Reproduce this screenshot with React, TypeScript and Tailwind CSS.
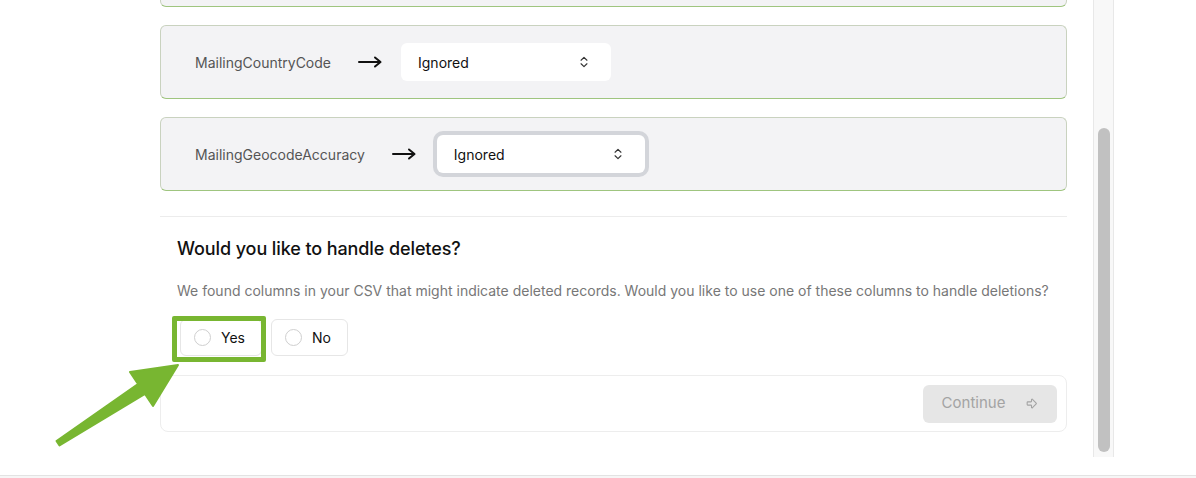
import { ArrowBigRight, ChevronsUpDown } from "lucide-react"

const font = { fontFamily: "Inter, 'Noto Sans', sans-serif" }

function LongArrow() {
  return (
    <svg width="24" height="12" viewBox="0 0 24 12" className="shrink-0">
      <path d="M1 6 H22 M17 1.5 L22.5 6 L17 10.5" fill="none" stroke="#111" strokeWidth="2" strokeLinecap="round" strokeLinejoin="round" />
    </svg>
  )
}

function Card({ children, className = "" }: { children?: React.ReactNode; className?: string }) {
  return (
    <div
      className={
        "h-[74px] shrink-0 rounded-md border border-[#c9d2bf] border-b-[#9fc57f] bg-[#f3f3f5] flex items-center pl-[34px] " +
        className
      }
    >
      {children}
    </div>
  )
}

function MappingRow({ label, focused, className = "" }: { label: string; focused?: boolean; className?: string }) {
  return (
    <Card className={className}>
      <span className="text-[14px] text-[#555]">{label}</span>
      <span className="ml-[27px]">
        <LongArrow />
      </span>
      <div
        className={
          "h-[38px] rounded-md bg-white flex items-center justify-between pl-[17px] pr-[20px] " +
          (focused ? "ring-[4px] ring-[#d3d5da] ml-[21px] w-[208px]" : "ml-[19px] w-[210px]")
        }
      >
        <span className="text-[14px] text-[#111]">Ignored</span>
        <ChevronsUpDown size={14} strokeWidth={2} className="text-[#333]" />
      </div>
    </Card>
  )
}

function Radio({ label }: { label: string }) {
  return (
    <div className="h-[37px] rounded-md border border-[#e6e6e6] bg-white flex items-center gap-[10px] pl-[13px] pr-[16px]">
      <span className="w-[17px] h-[17px] rounded-full border border-[#cfcfcf] bg-white" />
      <span className="text-[14px] text-[#111]">{label}</span>
    </div>
  )
}

export default function App() {
  return (
    <div className="w-[1196px] h-[478px] bg-white overflow-hidden flex flex-col" style={font}>
      <div className="h-[475px] flex relative">
        <div className="w-[1093px] h-[475px] overflow-hidden pl-[160px]">
          <div className="w-[907px] flex flex-col">
            <Card className="-mt-[67px]" />
            <MappingRow label="MailingCountryCode" className="mt-[18px]" />
            <MappingRow label="MailingGeocodeAccuracy" focused className="mt-[18px]" />

            <div className="mt-[25px] border-t border-[#ececec]" />

            <div className="pl-[17px] pt-[18px]">
              <h2 className="text-[18px] leading-[28px] font-medium text-[#111] tracking-[-0.1px]">
                Would you like to handle deletes?
              </h2>
              <p className="mt-[18px] text-[14px] leading-[20px] text-[#777]">
                We found columns in your CSV that might indicate deleted records. Would you like to use one of these
                columns to handle deletions?
              </p>
              <div className="mt-[18px] ml-[3px] flex gap-[9px]">
                <Radio label="Yes" />
                <Radio label="No" />
              </div>
            </div>

            <div className="mt-[19px] h-[57px] rounded-lg border border-[#ededed] bg-white flex items-center justify-end pr-[9px]">
              <div className="h-[38px] w-[134px] rounded-md bg-[#e6e6e6] flex items-center justify-center gap-[20px]">
                <span className="text-[15px] text-[#a3a3a3]">Continue</span>
                <ArrowBigRight size={13} strokeWidth={2} className="text-[#a3a3a3]" />
              </div>
            </div>
          </div>
        </div>

        <div className="w-[21px] h-[457px] bg-[#f8f8f8] border-x border-[#e8e8e8] flex flex-col pt-[128px] items-center">
          <div className="w-[12px] h-[324px] rounded-full bg-[#c1c1c1]" />
        </div>

        {/* annotation highlight */}
        <div className="absolute left-[172px] top-[316px] w-[94px] h-[46px] border-[5px] border-[#78b631] rounded-[2px]" />
        <svg className="absolute left-0 top-0 pointer-events-none" width="1196" height="475">
          <polygon
            points="178,365 130,372 138,384 56.5,441 59.5,445.5 145,394 153,406"
            fill="#78b631"
            stroke="#78b631"
            strokeWidth="2"
            strokeLinejoin="round"
          />
        </svg>
      </div>
      <div className="flex-1 border-t border-[#e3e3e3] bg-[#f6f6f6]" />
    </div>
  )
}
